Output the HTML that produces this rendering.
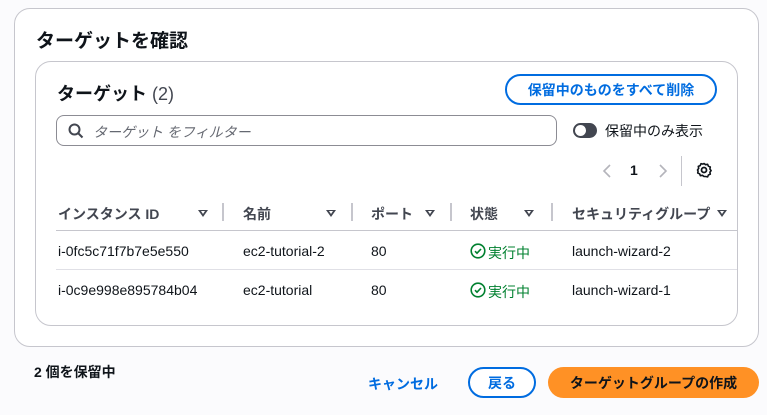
<!DOCTYPE html>
<html><head><meta charset="utf-8"><style>
*{box-sizing:border-box;margin:0;padding:0}
body{width:767px;height:415px;background:#fbfbfd;font-family:"Liberation Sans","Noto Sans CJK JP",sans-serif;color:#0f141a;position:relative;overflow:hidden;font-size:14px}
.abs{position:absolute;white-space:nowrap}
.outer{position:absolute;left:14px;top:8px;width:745px;height:339px;background:#fff;border:1px solid #c6c6cd;border-radius:16px;overflow:hidden}
.inner{position:absolute;left:20px;top:52px;width:703px;height:265px;border:1px solid #c6c6cd;border-radius:16px;overflow:hidden;background:#fff}
.btn{position:absolute;border:2px solid #006ce0;border-radius:20px;color:#006ce0;font-weight:bold;font-size:14px;display:flex;align-items:center;justify-content:center;background:#fff}
.hd{font-weight:bold;font-size:14px;color:#424650}
.tri{position:absolute;width:0;height:0;border-left:5px solid transparent;border-right:5px solid transparent;border-top:7px solid #424650}
.tri::after{content:"";position:absolute;left:-2.5px;top:-6px;border-left:2.5px solid transparent;border-right:2.5px solid transparent;border-top:3.5px solid #fff}
.div{position:absolute;width:2px;height:18px;background:#c6c6cd}
.hl{position:absolute;height:1px;background:#e0e0e6}
.ok{color:#00802f}
</style></head><body>
<div class="outer">
 <div class="abs" style="left:21px;top:17px;font-size:19px;font-weight:bold">ターゲットを確認</div>
 <div class="inner">
  <div class="abs" style="left:21px;top:18px;font-size:18px;font-weight:bold">ターゲット <span style="font-weight:normal;color:#424650">(2)</span></div>
  <div class="btn" style="left:469px;top:12px;width:212px;height:31px">保留中のものをすべて削除</div>
  <div class="abs" style="left:20px;top:53px;width:501px;height:31px;border:1px solid #8c8c94;border-radius:8px"></div>
  <svg class="abs" style="left:32px;top:61px" width="16" height="16" viewBox="0 0 16 16"><circle cx="6.5" cy="6.5" r="5" fill="none" stroke="#424650" stroke-width="2"/><path d="M10 10l4.5 4.5" stroke="#424650" stroke-width="2"/></svg>
  <div class="abs" style="left:57px;top:60px;font-style:italic;color:#656871;font-size:14px">ターゲット をフィルター</div>
  <div class="abs" style="left:537px;top:61px;width:24px;height:15px;border-radius:8px;background:#424650"></div>
  <div class="abs" style="left:539px;top:63px;width:11px;height:11px;border-radius:6px;background:#fff"></div>
  <div class="abs" style="left:569px;top:59px;font-size:14px">保留中のみ表示</div>
  <svg class="abs" style="left:566px;top:102px" width="10" height="14" viewBox="0 0 10 14"><path d="M8 1L2 7l6 6" fill="none" stroke="#b4b4bb" stroke-width="1.6"/></svg>
  <div class="abs" style="left:594px;top:100px;font-weight:bold">1</div>
  <svg class="abs" style="left:622px;top:102px" width="10" height="14" viewBox="0 0 10 14"><path d="M2 1l6 6-6 6" fill="none" stroke="#b4b4bb" stroke-width="1.6"/></svg>
  <div class="div" style="left:645px;top:94px;height:30px;width:1px"></div>
  <svg class="abs" style="left:660px;top:100px" width="16" height="16" viewBox="0 0 16 16"><circle cx="8" cy="8" r="2.5" fill="none" stroke="#0f141a" stroke-width="1.8"/><path d="M8 1.5l1.6 1.2 2-.4.8 1.9 1.9.8-.4 2 1.2 1.6-1.2 1.6.4 2-1.9.8-.8 1.9-2-.4L8 14.5l-1.6-1.2-2 .4-.8-1.9-1.9-.8.4-2L1.5 8l1.2-1.6-.4-2 1.9-.8.8-1.9 2 .4z" fill="none" stroke="#0f141a" stroke-width="1.6" stroke-linejoin="round"/></svg>
  <div class="abs hd" style="left:22px;top:142px">インスタンス ID</div><div class="tri" style="left:162px;top:148px"></div><div class="div" style="left:186px;top:141px"></div>
  <div class="abs hd" style="left:207px;top:142px">名前</div><div class="tri" style="left:290px;top:148px"></div><div class="div" style="left:315px;top:141px"></div>
  <div class="abs hd" style="left:335px;top:142px">ポート</div><div class="tri" style="left:389px;top:148px"></div><div class="div" style="left:414px;top:141px"></div>
  <div class="abs hd" style="left:434px;top:142px">状態</div><div class="tri" style="left:488px;top:148px"></div><div class="div" style="left:515px;top:141px"></div>
  <div class="abs hd" style="left:536px;top:142px">セキュリティグループ</div><div class="tri" style="left:681px;top:148px"></div>
  <div class="hl" style="left:20px;top:168px;width:690px;background:#c6c6cd"></div>
  <div class="abs" style="left:22px;top:181px">i-0fc5c71f7b7e5e550</div>
  <div class="abs" style="left:207px;top:181px">ec2-tutorial-2</div>
  <div class="abs" style="left:335px;top:181px">80</div>
  <svg class="abs" style="left:434px;top:181px" width="16" height="16" viewBox="0 0 16 16"><circle cx="8" cy="8" r="6.8" fill="none" stroke="#00802f" stroke-width="1.6"/><path d="M5 8.2l2 2 4-4.2" fill="none" stroke="#00802f" stroke-width="1.6"/></svg>
  <div class="abs ok" style="left:452px;top:181px">実行中</div>
  <div class="abs" style="left:536px;top:181px">launch-wizard-2</div>
  <div class="hl" style="left:20px;top:207px;width:690px"></div>
  <div class="abs" style="left:22px;top:220px">i-0c9e998e895784b04</div>
  <div class="abs" style="left:207px;top:220px">ec2-tutorial</div>
  <div class="abs" style="left:335px;top:220px">80</div>
  <svg class="abs" style="left:434px;top:220px" width="16" height="16" viewBox="0 0 16 16"><circle cx="8" cy="8" r="6.8" fill="none" stroke="#00802f" stroke-width="1.6"/><path d="M5 8.2l2 2 4-4.2" fill="none" stroke="#00802f" stroke-width="1.6"/></svg>
  <div class="abs ok" style="left:452px;top:220px">実行中</div>
  <div class="abs" style="left:536px;top:220px">launch-wizard-1</div>
 </div>
</div>
<div class="abs" style="left:34px;top:362px;font-weight:bold">2 個を保留中</div>
<div class="abs" style="left:368px;top:374px;font-weight:bold;color:#006ce0">キャンセル</div>
<div class="btn" style="left:468px;top:367px;width:68px;height:31px">戻る</div>
<div class="abs" style="left:548px;top:367px;width:211px;height:31px;border-radius:16px;background:#ff9125;font-weight:bold;display:flex;align-items:center;justify-content:center;color:#0f141a">ターゲットグループの作成</div>
</body></html>
